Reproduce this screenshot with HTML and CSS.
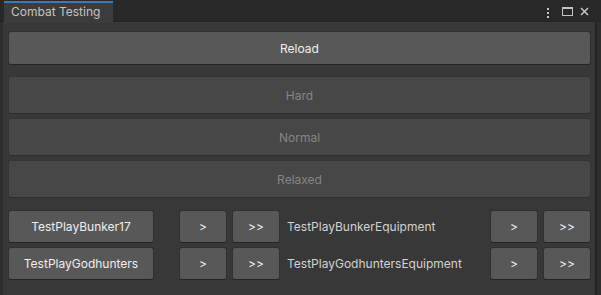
FILE: index.html
```html
<!DOCTYPE html>
<html lang="en">
<head>
    <meta charset="UTF-8">
    <title>Combat Testing</title>
    <link rel="stylesheet" href="styles.css">
</head>
<body>
    <div class="window">
        <div class="titlebar">
            <div class="tab">Combat Testing</div>
            <div class="controls">
                <svg width="4" height="10" viewBox="0 0 4 10">
                    <rect x="1" y="0" width="2" height="2" fill="#c4c4c4"/>
                    <rect x="1" y="4" width="2" height="2" fill="#c4c4c4"/>
                    <rect x="1" y="8" width="2" height="2" fill="#c4c4c4"/>
                </svg>
                <svg width="11" height="9" viewBox="0 0 11 9">
                    <rect x="0.5" y="0.5" width="10" height="8" fill="none" stroke="#c4c4c4"/>
                    <rect x="0" y="0" width="11" height="2" fill="#c4c4c4"/>
                </svg>
                <svg width="9" height="9" viewBox="0 0 9 9">
                    <path d="M1 1 L8 8 M8 1 L1 8" stroke="#c4c4c4" stroke-width="1.5"/>
                </svg>
            </div>
        </div>
        <div class="content">
            <button class="btn reload">Reload</button>

            <div class="difficulty">
                <button class="btn level" disabled>Hard</button>
                <button class="btn level" disabled>Normal</button>
                <button class="btn level" disabled>Relaxed</button>
            </div>

            <div class="tests">
                <div class="test-row">
                    <button class="btn play">TestPlayBunker17</button>
                    <button class="btn step">&gt;</button>
                    <button class="btn step">&gt;&gt;</button>
                    <span class="test-label">TestPlayBunkerEquipment</span>
                    <button class="btn step">&gt;</button>
                    <button class="btn step">&gt;&gt;</button>
                </div>
                <div class="test-row">
                    <button class="btn play">TestPlayGodhunters</button>
                    <button class="btn step">&gt;</button>
                    <button class="btn step">&gt;&gt;</button>
                    <span class="test-label">TestPlayGodhuntersEquipment</span>
                    <button class="btn step">&gt;</button>
                    <button class="btn step">&gt;&gt;</button>
                </div>
            </div>
        </div>
    </div>
</body>
</html>
```

FILE: styles.css
```css
body {
    margin: 0;
    background: #2d2d2d;
    font-family: Inter, "Liberation Sans", sans-serif;
    font-size: 12px;
    overflow: hidden;
}
.window {
    width: 601px;
    height: 295px;
    display: flex;
    flex-direction: column;
}
.titlebar {
    height: 21px;
    display: flex;
    align-items: flex-start;
    background: #282828;
    border-bottom: 1px solid #232323;
}
.tab {
    margin-left: 4px;
    margin-top: 1px;
    width: 109px;
    height: 22px;
    box-sizing: border-box;
    padding-left: 7px;
    line-height: 18px;
    background: #3c3c3c;
    border-top: 2px solid #3a79bb;
    color: #c4c4c4;
    position: relative;
    z-index: 1;
}
.controls {
    margin-left: auto;
    margin-right: 12px;
    margin-top: 7px;
    display: flex;
    align-items: flex-start;
}
.controls svg:nth-child(1) {
    margin-top: 1px;
    margin-right: 12px;
}
.controls svg:nth-child(2) {
    margin-right: 7px;
}
.content {
    flex: 1;
    background: #383838;
    margin-left: 3px;
    margin-right: 4px;
    padding: 9px 4px 0 5px;
    border-right: 2px solid #232323;
}
.btn {
    display: block;
    box-sizing: border-box;
    font-family: inherit;
    font-size: 12px;
    color: #eeeeee;
    background: #585858;
    border: 1px solid #303030;
    border-bottom-color: #242424;
    border-radius: 3px;
    padding: 0;
    margin: 0;
}
.reload {
    width: 100%;
    height: 34px;
}
.difficulty {
    margin-top: 11px;
    display: flex;
    flex-direction: column;
    gap: 4px;
}
.level {
    width: 100%;
    height: 38px;
    background: #474747;
    color: #858585;
    border-color: #353535;
    border-bottom-color: #2e2e2e;
}
.tests {
    margin-top: 12px;
    display: flex;
    flex-direction: column;
    gap: 4px;
}
.test-row {
    display: flex;
    align-items: center;
    gap: 5px;
}
.play {
    width: 146px;
    height: 33px;
    margin-right: 20px;
}
.step {
    width: 48px;
    height: 33px;
}
.test-label {
    flex: 1;
    padding-left: 2px;
    color: #d2d2d2;
}
```
